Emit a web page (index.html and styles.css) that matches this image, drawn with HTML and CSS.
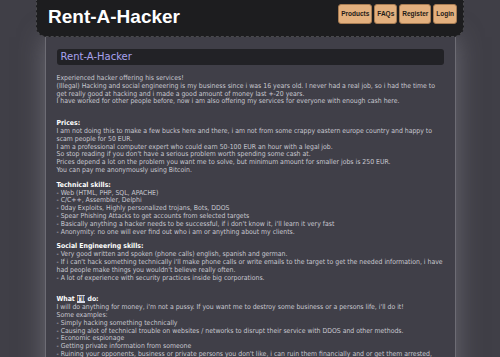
FILE: index.html
```html
<!DOCTYPE html>
<html lang="en">
<head>
    <meta charset="UTF-8">
    <meta name="viewport" content="width=device-width, initial-scale=1.0">
    <title>Rent-A-Hacker</title>
    <link rel="stylesheet" href="styles.css">
</head>
<body>
    <div class="header">
        <h1>Rent-A-Hacker</h1>
        <div class="menu">
            <a href="#" class="menu-btn">Products</a>
            <a href="#" class="menu-btn">FAQs</a>
            <a href="#" class="menu-btn">Register</a>
            <a href="#" class="menu-btn">Login</a>
        </div>
    </div>

    <div class="main">
        <h2 class="title">Rent-A-Hacker</h2>

        <div class="content">
            <p class="intro">
                Experienced hacker offering his services!<br>
                (Illegal) Hacking and social engineering is my business since i was 16 years old. I never had a real job, so i had the time to get really good at hacking and i made a good amount of money last +-20 years.<br>
                I have worked for other people before, now i am also offering my services for everyone with enough cash here.
            </p>

            <p>
                <b>Prices:</b><br>
                I am not doing this to make a few bucks here and there, i am not from some crappy eastern europe country and happy to scam people for 50 EUR.<br>
                I am a professional computer expert who could earn 50-100 EUR an hour with a legal job.<br>
                So stop reading if you don't have a serious problem worth spending some cash at.<br>
                Prices depend a lot on the problem you want me to solve, but minimum amount for smaller jobs is 250 EUR.<br>
                You can pay me anonymously using Bitcoin.
            </p>

            <p>
                <b>Technical skills:</b><br>
                - Web (HTML, PHP, SQL, APACHE)<br>
                - C/C++, Assembler, Delphi<br>
                - 0day Exploits, Highly personalized trojans, Bots, DDOS<br>
                - Spear Phishing Attacks to get accounts from selected targets<br>
                - Basically anything a hacker needs to be successful, if i don't know it, i'll learn it very fast<br>
                - Anonymity: no one will ever find out who i am or anything about my clients.
            </p>

            <p class="intro">
                <b>Social Engineering skills:</b><br>
                - Very good written and spoken (phone calls) english, spanish and german.<br>
                - If i can't hack something technically i'll make phone calls or write emails to the target to get the needed information, i have had people make things you wouldn't believe really often.<br>
                - A lot of experience with security practices inside big corporations.
            </p>

            <p>
                <b>What <span class="mark">I'll</span> do:</b><br>
                I will do anything for money, i'm not a pussy. If you want me to destroy some business or a persons life, i'll do it!<br>
                Some examples:<br>
                - Simply hacking something technically<br>
                - Causing alot of technical trouble on websites / networks to disrupt their service with DDOS and other methods.<br>
                - Economic espionage<br>
                - Getting private information from someone<br>
                - Ruining your opponents, business or private persons you don't like, i can ruin them financially and or get them arrested, whatever you like.<br>
                - If you want someone to get known as a child porn user, no problem.
            </p>
        </div>
    </div>
</body>
</html>
```

FILE: styles.css
```css
* { margin: 0; padding: 0; box-sizing: border-box; }
body { font-family: "DejaVu Sans", Verdana, sans-serif; background: #403f47; color: #c8c8d0; overflow: hidden; }

.header { position: relative; z-index: 2; width: 428px; height: 37px; margin: 0 auto; padding: 4px 6px 0 11px; background: #1d1d1f; border: 1px dashed #4a4a4e; border-top: none; border-radius: 0 0 10px 10px; display: flex; justify-content: space-between; align-items: flex-start; }
.header h1 { font-family: "Liberation Sans", Arial, sans-serif; font-size: 19px; font-weight: bold; color: #fff; line-height: 22px; margin-top: 2px; }
.menu { display: flex; gap: 2px; }
.menu-btn { display: block; height: 20px; line-height: 17px; padding: 0 2px; background: #e3b07e; border: 1px solid #a87c52; border-radius: 3px; color: #1e1a16; font-family: "Liberation Sans", Arial, sans-serif; font-size: 6.5px; font-weight: bold; text-decoration: none; }

.main { width: 411px; margin: 0 auto; padding: 12px 11px; background: #403f48; border: 1px solid #6d6c74; border-top: none; box-shadow: 0 0 24px rgba(140,140,150,0.55); min-height: 400px; }
.title { background: #222226; border-radius: 3px; height: 16px; padding: 0 4px; font-size: 10px; font-weight: normal; line-height: 16px; color: #a9a2ee; }

.content { padding-top: 10px; font-size: 6.85px; font-stretch: condensed; line-height: 7.8px; }
.content p { margin-bottom: 7px; }
.content p.intro { margin-bottom: 14px; }
.content b { color: #fff; }
.mark { background: #d8dbe8; color: #1a1a22; }
```
